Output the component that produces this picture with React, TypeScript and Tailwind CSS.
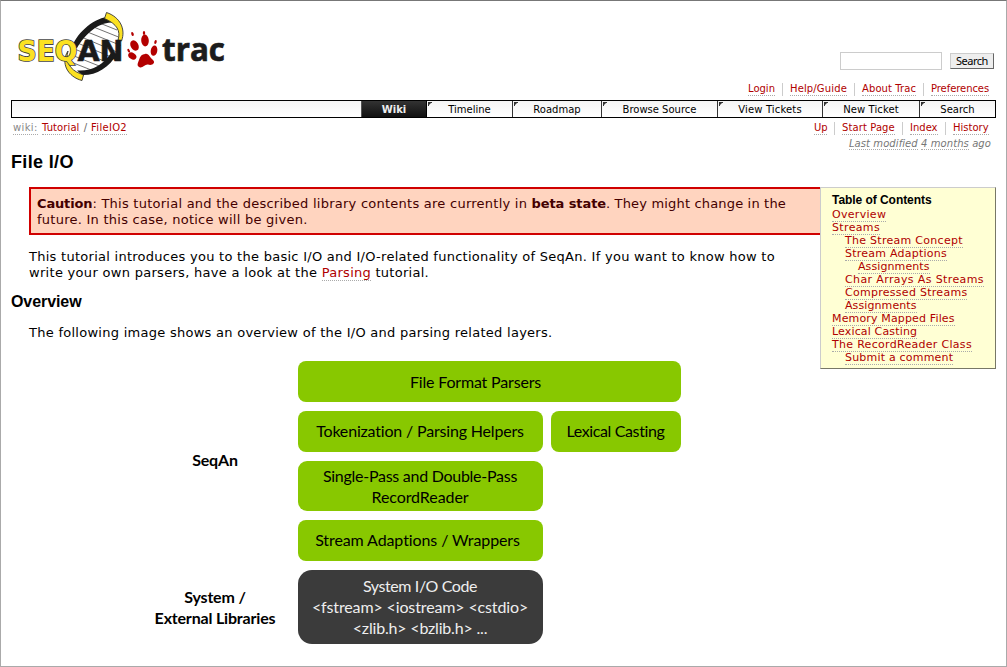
import type { ReactNode } from "react";

const link = "border-b border-dotted border-[#aaa] text-[#b00000]";

function Logo() {
  return (
    <svg width="215" height="76" viewBox="11 8 215 76" className="block">
      <g stroke="#333" strokeWidth="0.7" fill="none">
        <path d="M97 22L117 30M91 26L121 38M85 31L121 45.500M79 36L117 52M75 42L115 58.500M72 48L109 63M69 54L103 67.500M71 62L95 71.500" />
      </g>
      <path d="M107 17Q113 19 111 22.500C98 23 85 34 77 48L71 49C76 34 92 19 107 17Z" fill="#1a1a1a" />
      <path d="M117 54C109 68 96 75.500 82 75L77 70.500C92 71.500 103 65 111 53Z" fill="#1a1a1a" />
      <path d="M106.500 12.500C120 17 126 29 121.500 41L118 40C121 31 117 24 104.500 18.500Z" fill="#fbe122" stroke="#333" strokeWidth="0.9" />
      <path d="M68 51C65 61 70 70 80 73.500L83.500 75L82 80.500C68 77 60 63 68 51Z" fill="#fbe122" stroke="#333" strokeWidth="0.9" />
      <text x="17.500" y="61" fontSize="28.500" fontWeight="bold" fontFamily="DejaVu Sans, sans-serif" textLength="60" lengthAdjust="spacingAndGlyphs" fill="#fbe122" stroke="#444" strokeWidth="1.700" paintOrder="stroke">SEQ</text>
      <text x="77.500" y="61" fontSize="28.500" fontWeight="bold" fontFamily="DejaVu Sans, sans-serif" textLength="46" lengthAdjust="spacingAndGlyphs" fill="#1a1a1a" stroke="#1a1a1a" strokeWidth="0.600">AN</text>
      <g fill="#b30000">
        <ellipse cx="134.500" cy="45.500" rx="3.900" ry="5.500" transform="rotate(-28 134.500 45.500)" />
        <ellipse cx="145" cy="40.500" rx="3.800" ry="5.900" transform="rotate(-6 145 40.500)" />
        <ellipse cx="154" cy="50.700" rx="3.300" ry="5.200" transform="rotate(10 154 50.700)" />
        <ellipse cx="132.300" cy="56" rx="4.400" ry="3.200" transform="rotate(35 132.300 56)" />
        <path d="M145 54C149 53 150 58 153 60C156 63 152 66 148 64.500C145 64 143 68 140 67.500C136 66 138 63 139 60C140 56 142 54 145 54Z" />
        <ellipse cx="132.500" cy="34" rx="1.200" ry="2" transform="rotate(-20 132.500 34)" />
        <ellipse cx="144" cy="33" rx="1.200" ry="2" />
        <ellipse cx="155.500" cy="42" rx="1.200" ry="2" transform="rotate(15 155.500 42)" />
        <ellipse cx="128.700" cy="50.700" rx="1.100" ry="2" transform="rotate(-30 128.700 50.700)" />
      </g>
      <text x="162" y="61" fontSize="32" fontWeight="bold" fontFamily="Open Sans, sans-serif" textLength="63" lengthAdjust="spacingAndGlyphs" fill="#1c1c1c" stroke="#1c1c1c" strokeWidth="0.700">trac</text>
    </svg>
  );
}

function LinkRow({ items }: { items: [string, string][] }) {
  return (
    <ul className="flex text-[10px] leading-[12px]">
      {items.map(([label, cls], i) => (
        <li key={label} className={i ? "ml-[7px] border-l border-[#ccc] pl-[7px]" : ""}>
          <a className={`block whitespace-nowrap ${link} ${cls}`}>{label}</a>
        </li>
      ))}
    </ul>
  );
}

const tabs: [string, string][] = [
  ["Timeline", "w-[85px]"],
  ["Roadmap", "w-[89px]"],
  ["Browse Source", "w-[116px]"],
  ["View Tickets", "w-[105px] tracking-[0.15px]"],
  ["New Ticket", "w-[97px] tracking-[0.1px]"],
  ["Search", "w-[76px]"],
];

const toc: [string, string][] = [
  ["Overview", "tracking-[0.3px]"],
  ["Streams", "tracking-[0.35px]"],
  ["The Stream Concept", "ml-[13px] tracking-[0.28px]"],
  ["Stream Adaptions", "ml-[13px] tracking-[0.24px]"],
  ["Assignments", "ml-[26px] tracking-[0.1px]"],
  ["Char Arrays As Streams", "ml-[13px] tracking-[0.38px]"],
  ["Compressed Streams", "ml-[13px] tracking-[0.28px]"],
  ["Assignments", "ml-[13px] tracking-[0.1px]"],
  ["Memory Mapped Files", "tracking-[0.15px]"],
  ["Lexical Casting", "tracking-[0.15px]"],
  ["The RecordReader Class", "tracking-[0.3px]"],
  ["Submit a comment", "ml-[13px] tracking-[0.2px]"],
];

function Box({ className, children }: { className: string; children: ReactNode }) {
  return (
    <div className={`flex flex-col items-center justify-center whitespace-nowrap ${className}`}>
      {children}
    </div>
  );
}

export default function App() {
  return (
    <div className="h-[667px] w-[1007px] overflow-hidden border border-[#aaa] border-t-[#777] bg-white pr-[10px] pl-[10px] font-['DejaVu_Sans',sans-serif] text-black">
      <header className="flex h-[99px] justify-between">
        <div className="pt-[7px]">
          <Logo />
        </div>
        <div className="flex flex-col items-end pt-[51px]">
          <form className="flex items-center gap-[8px] pr-[2px]">
            <input className="h-[18px] w-[102px] border border-[#ccc] bg-white" />
            <button
              type="button"
              className="h-[16px] w-[44px] border border-[#ccc] border-r-[#666] border-b-[#666] bg-[#eee] font-['Noto_Sans',sans-serif] text-[11px] leading-[14px] tracking-[-0.5px]"
            >
              Search
            </button>
          </form>
          <nav className="mt-[13px] pr-[7px]">
            <LinkRow
              items={[
                ["Login", "w-[27px]"],
                ["Help/Guide", "w-[57px] tracking-[0.14px]"],
                ["About Trac", "w-[54px] tracking-[0.1px]"],
                ["Preferences", "w-[58px] tracking-[-0.07px]"],
              ]}
            />
          </nav>
        </div>
      </header>

      <nav className="flex h-[18px] w-[985px] justify-end border border-black bg-linear-to-b from-[#f4f4f4] to-white text-[10px] leading-[17px]">
        <div className="w-[66px] border-x border-[#555] border-r-black bg-linear-to-b from-[#333] to-[#111] text-center font-bold text-[#eee]">
          Wiki
        </div>
        {tabs.map(([label, cls], i) => (
          <div
            key={label}
            className={`flex justify-center ${i ? "border-l border-[#333]" : ""} ${cls}`}
          >
            <svg width="4" height="4" className="-ml-[4px] mr-auto translate-x-[5px] translate-y-[1px]">
              <path d="M0 0H4V1H3L1 3V4H0Z" fill="#333" />
            </svg>
            <span className="mr-auto whitespace-nowrap">{label}</span>
          </div>
        ))}
      </nav>

      <div className="flex h-[33px] justify-between pt-[4px] text-[10px] leading-[12px]">
        <div className="flex pl-[2px] text-[#666]">
          <a className="h-[13px] w-[25px] border-b border-dotted border-[#aaa] tracking-[0.35px] text-[#888]">wiki:</a>
          <a className={`ml-[4px] h-[13px] w-[38px] tracking-[0.09px] ${link}`}>Tutorial</a>
          <span className="w-[11px] text-center">/</span>
          <a className={`h-[13px] w-[36px] tracking-[0.3px] ${link}`}>FileIO2</a>
        </div>
        <div className="flex flex-col items-end pr-[5px]">
          <div className="pr-[2px]">
            <LinkRow
              items={[
                ["Up", "w-[13px]"],
                ["Start Page", "w-[53px] tracking-[0.1px]"],
                ["Index", "w-[28px]"],
                ["History", "w-[36px]"],
              ]}
            />
          </div>
          <div className="mt-[3px] text-[10px] text-[#777] italic tracking-[0.08px]">
            <span className="border-b border-dotted border-[#aaa]">Last modified</span>{" "}
            <span className="border-b border-dotted border-[#aaa]">4 months</span> ago
          </div>
        </div>
      </div>

      <h1 className="h-[36px] font-['Liberation_Sans',sans-serif] text-[18px] leading-[22px] font-bold tracking-[0.35px]">
        File I/O
      </h1>

      <div className="flex items-start">
        <main className="w-[809px] text-[13px] leading-[16px] tracking-[0.27px]">
          <div className="ml-[18px] h-[48px] border-2 border-r-0 border-[#d00000] bg-[#ffd4bf] pt-[7px] pl-[6px] whitespace-nowrap text-[#400] tracking-[0.25px]">
            <b className="tracking-[-0.15px]">Caution</b>: This tutorial and the described library contents are currently in{" "}
            <b className="tracking-[-0.1px]">beta state</b>
            <span className="tracking-[0.17px]">. They might change in the</span>
            <br />
            future. In this case, notice will be given.
          </div>
          <p className="mt-[14px] ml-[18px] whitespace-nowrap">
            This tutorial introduces you to the basic I/O and I/O-related functionality of SeqAn. If you want to know how to
            <br />
            <span className="tracking-[0.3px]">write your own parsers, have a look at the </span>
            <a className={link}>Parsing</a> tutorial.
          </p>
          <h2 className="mt-[11px] font-['Liberation_Sans',sans-serif] text-[16px] leading-[20px] font-bold tracking-[-0.08px]">
            Overview
          </h2>
          <p className="mt-[13px] ml-[18px]">
            The following image shows an overview of the I/O and parsing related layers.
          </p>

          <div className="mt-[20px] ml-[129px] flex font-['Lato',sans-serif] text-[16px] leading-[21px] tracking-[-0.18px]">
            <div className="mr-[7.5px] flex w-[150px] flex-col gap-[9px] font-bold">
              <Box className="h-[200px] pb-[4px]">SeqAn</Box>
              <Box className="h-[74px] pb-[1px]">
                <span>System /</span>
                <span>External Libraries</span>
              </Box>
            </div>
            <div className="flex w-[383px] flex-col gap-[9px]">
              <Box className="h-[41px] rounded-[8px] bg-[#88c800] pr-[27px]">File Format Parsers</Box>
              <div className="flex gap-[8px]">
                <Box className="h-[41px] w-[245px] rounded-[8px] bg-[#88c800] pb-[2px]">Tokenization / Parsing Helpers</Box>
                <Box className="h-[41px] w-[130px] rounded-[8px] bg-[#88c800] pb-[2px] tracking-[-0.38px]">Lexical Casting</Box>
              </div>
              <Box className="h-[50px] w-[245px] rounded-[9px] bg-[#88c800]">
                <span className="tracking-[-0.27px]">Single-Pass and Double-Pass</span>
                <span className="tracking-[-0.08px]">RecordReader</span>
              </Box>
              <Box className="h-[41px] w-[245px] rounded-[8px] bg-[#88c800] pr-[5px] pb-[2px] tracking-[-0.1px]">Stream Adaptions / Wrappers</Box>
              <Box className="h-[74px] w-[245px] rounded-[14px] bg-[#3b3b3b] pb-[1px] text-[#eee]">
                <span className="tracking-[-0.4px]">System I/O Code</span>
                <span className="tracking-[-0.13px]">&lt;fstream&gt; &lt;iostream&gt; &lt;cstdio&gt;</span>
                <span>&lt;zlib.h&gt; &lt;bzlib.h&gt; ...</span>
              </Box>
            </div>
          </div>
        </main>

        <aside className="h-[182px] w-[176px] border border-[#ccc] border-r-[#776] border-b-[#776] bg-[#ffffd4] pt-[5px] pl-[11px] text-[11px] leading-[13px]">
          <h4 className="h-[16px] font-['Liberation_Sans',sans-serif] text-[12px] leading-[14px] font-bold tracking-[-0.05px]">
            Table of Contents
          </h4>
          <ul>
            {toc.map(([label, cls], i) => (
              <li key={i} className="flex h-[13px]">
                <a className={`h-[13px] whitespace-nowrap leading-[12px] ${link} ${cls}`}>{label}</a>
              </li>
            ))}
          </ul>
        </aside>
      </div>
    </div>
  );
}
